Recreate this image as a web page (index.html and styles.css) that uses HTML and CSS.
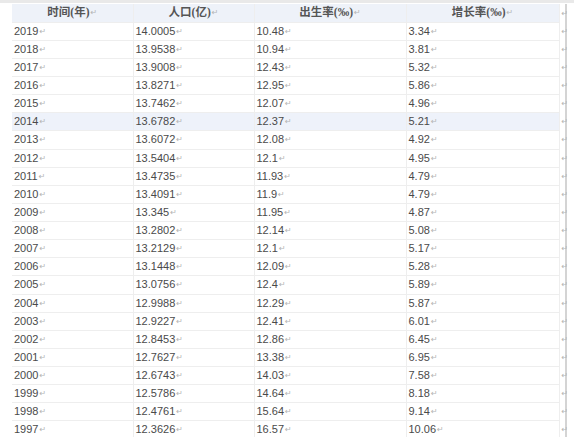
FILE: index.html
```html
<!DOCTYPE html>
<html lang="zh">
<head>
<meta charset="utf-8">
<link rel="stylesheet" href="styles.css">
</head>
<body>
<div class="page">
  <table class="data">
    <colgroup>
      <col class="c1"><col class="c2"><col class="c3"><col class="c4"><col class="c5">
    </colgroup>
    <thead>
      <tr class="head">
        <th>时间(年)<span class="rt">↵</span></th>
        <th>人口(亿)<span class="rt">↵</span></th>
        <th>出生率(‰)<span class="rt">↵</span></th>
        <th>增长率(‰)<span class="rt">↵</span></th>
        <td class="end"><span class="rt">↵</span></td>
      </tr>
    </thead>
    <tbody>
      <tr><td>2019<span class="rt">↵</span></td><td>14.0005<span class="rt">↵</span></td><td>10.48<span class="rt">↵</span></td><td>3.34<span class="rt">↵</span></td><td class="end"><span class="rt">↵</span></td></tr>
      <tr><td>2018<span class="rt">↵</span></td><td>13.9538<span class="rt">↵</span></td><td>10.94<span class="rt">↵</span></td><td>3.81<span class="rt">↵</span></td><td class="end"><span class="rt">↵</span></td></tr>
      <tr><td>2017<span class="rt">↵</span></td><td>13.9008<span class="rt">↵</span></td><td>12.43<span class="rt">↵</span></td><td>5.32<span class="rt">↵</span></td><td class="end"><span class="rt">↵</span></td></tr>
      <tr><td>2016<span class="rt">↵</span></td><td>13.8271<span class="rt">↵</span></td><td>12.95<span class="rt">↵</span></td><td>5.86<span class="rt">↵</span></td><td class="end"><span class="rt">↵</span></td></tr>
      <tr><td>2015<span class="rt">↵</span></td><td>13.7462<span class="rt">↵</span></td><td>12.07<span class="rt">↵</span></td><td>4.96<span class="rt">↵</span></td><td class="end"><span class="rt">↵</span></td></tr>
      <tr class="hl"><td>2014<span class="rt">↵</span></td><td>13.6782<span class="rt">↵</span></td><td>12.37<span class="rt">↵</span></td><td>5.21<span class="rt">↵</span></td><td class="end"><span class="rt">↵</span></td></tr>
      <tr><td>2013<span class="rt">↵</span></td><td>13.6072<span class="rt">↵</span></td><td>12.08<span class="rt">↵</span></td><td>4.92<span class="rt">↵</span></td><td class="end"><span class="rt">↵</span></td></tr>
      <tr><td>2012<span class="rt">↵</span></td><td>13.5404<span class="rt">↵</span></td><td>12.1<span class="rt">↵</span></td><td>4.95<span class="rt">↵</span></td><td class="end"><span class="rt">↵</span></td></tr>
      <tr><td>2011<span class="rt">↵</span></td><td>13.4735<span class="rt">↵</span></td><td>11.93<span class="rt">↵</span></td><td>4.79<span class="rt">↵</span></td><td class="end"><span class="rt">↵</span></td></tr>
      <tr><td>2010<span class="rt">↵</span></td><td>13.4091<span class="rt">↵</span></td><td>11.9<span class="rt">↵</span></td><td>4.79<span class="rt">↵</span></td><td class="end"><span class="rt">↵</span></td></tr>
      <tr><td>2009<span class="rt">↵</span></td><td>13.345<span class="rt">↵</span></td><td>11.95<span class="rt">↵</span></td><td>4.87<span class="rt">↵</span></td><td class="end"><span class="rt">↵</span></td></tr>
      <tr><td>2008<span class="rt">↵</span></td><td>13.2802<span class="rt">↵</span></td><td>12.14<span class="rt">↵</span></td><td>5.08<span class="rt">↵</span></td><td class="end"><span class="rt">↵</span></td></tr>
      <tr><td>2007<span class="rt">↵</span></td><td>13.2129<span class="rt">↵</span></td><td>12.1<span class="rt">↵</span></td><td>5.17<span class="rt">↵</span></td><td class="end"><span class="rt">↵</span></td></tr>
      <tr><td>2006<span class="rt">↵</span></td><td>13.1448<span class="rt">↵</span></td><td>12.09<span class="rt">↵</span></td><td>5.28<span class="rt">↵</span></td><td class="end"><span class="rt">↵</span></td></tr>
      <tr><td>2005<span class="rt">↵</span></td><td>13.0756<span class="rt">↵</span></td><td>12.4<span class="rt">↵</span></td><td>5.89<span class="rt">↵</span></td><td class="end"><span class="rt">↵</span></td></tr>
      <tr><td>2004<span class="rt">↵</span></td><td>12.9988<span class="rt">↵</span></td><td>12.29<span class="rt">↵</span></td><td>5.87<span class="rt">↵</span></td><td class="end"><span class="rt">↵</span></td></tr>
      <tr><td>2003<span class="rt">↵</span></td><td>12.9227<span class="rt">↵</span></td><td>12.41<span class="rt">↵</span></td><td>6.01<span class="rt">↵</span></td><td class="end"><span class="rt">↵</span></td></tr>
      <tr><td>2002<span class="rt">↵</span></td><td>12.8453<span class="rt">↵</span></td><td>12.86<span class="rt">↵</span></td><td>6.45<span class="rt">↵</span></td><td class="end"><span class="rt">↵</span></td></tr>
      <tr><td>2001<span class="rt">↵</span></td><td>12.7627<span class="rt">↵</span></td><td>13.38<span class="rt">↵</span></td><td>6.95<span class="rt">↵</span></td><td class="end"><span class="rt">↵</span></td></tr>
      <tr><td>2000<span class="rt">↵</span></td><td>12.6743<span class="rt">↵</span></td><td>14.03<span class="rt">↵</span></td><td>7.58<span class="rt">↵</span></td><td class="end"><span class="rt">↵</span></td></tr>
      <tr><td>1999<span class="rt">↵</span></td><td>12.5786<span class="rt">↵</span></td><td>14.64<span class="rt">↵</span></td><td>8.18<span class="rt">↵</span></td><td class="end"><span class="rt">↵</span></td></tr>
      <tr><td>1998<span class="rt">↵</span></td><td>12.4761<span class="rt">↵</span></td><td>15.64<span class="rt">↵</span></td><td>9.14<span class="rt">↵</span></td><td class="end"><span class="rt">↵</span></td></tr>
      <tr><td>1997<span class="rt">↵</span></td><td>12.3626<span class="rt">↵</span></td><td>16.57<span class="rt">↵</span></td><td>10.06<span class="rt">↵</span></td><td class="end"><span class="rt">↵</span></td></tr>
    </tbody>
  </table>
</div>
</body>
</html>
```

FILE: styles.css
```css
html, body {
  margin: 0;
  padding: 0;
  background: #ffffff;
}

body {
  width: 574px;
  height: 437px;
  overflow: hidden;
}

.page {
  border-top: 3px solid #e9e9e9;
  padding-left: 12px;
  padding-top: 1px;
  box-sizing: border-box;
}

.data {
  border-collapse: collapse;
  table-layout: fixed;
  width: 554px;
  font-family: "Liberation Sans", Arial, "Noto Sans CJK SC", sans-serif;
  font-size: 11px;
  color: #4a4a4a;
}

.c1 { width: 121px; }
.c2 { width: 121px; }
.c3 { width: 152px; }
.c4 { width: 153px; }
.c5 { width: 7px; }

.data td, .data th {
  height: 18.13px;
  padding: 0 0 0 2px;
  box-sizing: border-box;
  border-bottom: 1px solid #eeeeee;
  border-right: 1px solid #eeeeee;
  white-space: nowrap;
  overflow: visible;
  vertical-align: middle;
  line-height: 14px;
}

.data th {
  height: 17px;
  text-align: center;
  font-family: "Liberation Serif", "Noto Sans CJK SC", serif;
  font-weight: bold;
  font-size: 11.5px;
  color: #555555;
  background: #eef2f9;
  padding: 0;
}

.head td.end {
  background: #ffffff;
}

.data td.end {
  border-right: 2px solid #d4d4d4;
  border-bottom: none;
  padding: 0 0 0 1px;
  text-align: left;
}

.hl td {
  background: #eef2fa;
}

.hl td.end {
  background: #ffffff;
}

.rt {
  color: #b4b4b4;
  font-size: 8px;
  font-family: "DejaVu Sans", sans-serif;
  font-weight: normal;
  margin-left: 1px;
  vertical-align: 1px;
}
```
